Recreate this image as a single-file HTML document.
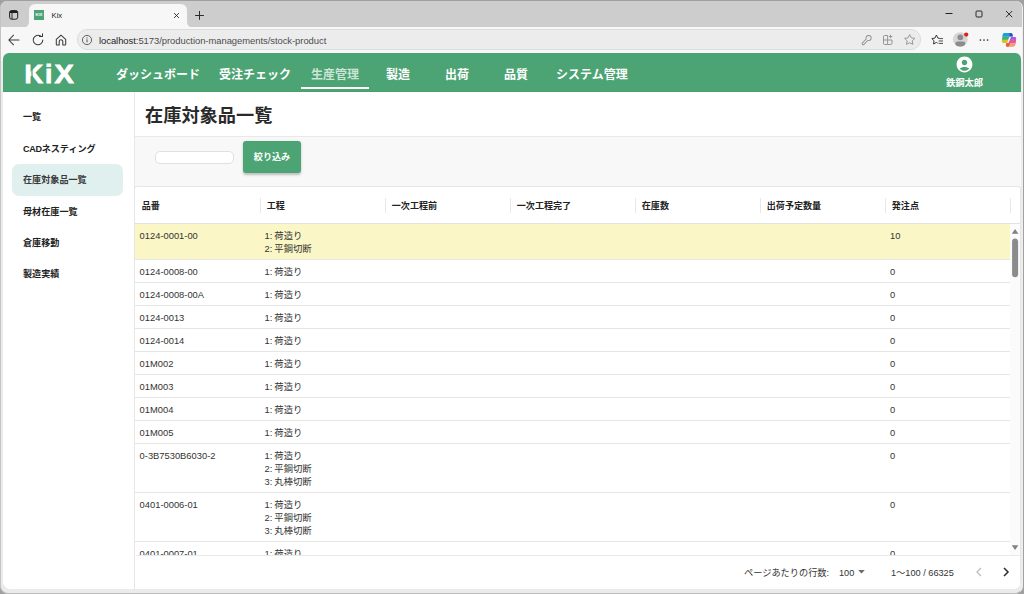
<!DOCTYPE html>
<html lang="ja">
<head>
<meta charset="utf-8">
<title>Kix</title>
<style>
*{box-sizing:border-box;margin:0;padding:0}
html,body{width:1024px;height:594px;overflow:hidden}
body{position:relative;background:#a0a0a0;font-family:"Liberation Sans","Noto Sans CJK JP",sans-serif;color:#222}
.abs{position:absolute}
/* ---------- window frame ---------- */
#win{position:absolute;left:0;top:1px;width:1023px;height:593px;background:#ebebeb;border-radius:7px 7px 8px 8px;overflow:hidden;border-left:1px solid #c4c4c4;border-bottom:1px solid #bcbcbc;border-right:1px solid #f0f0f0}
#tabstrip{position:absolute;left:0;top:0;width:1023px;height:26px;background:#cdcdcd}
#tab{position:absolute;left:28px;top:3px;width:158px;height:24px;background:#f7f7f7;border-radius:6px 6px 0 0}
#toolbar{position:absolute;left:0;top:26px;width:1023px;height:34px;background:#f7f7f7}
#urlpill{position:absolute;left:76px;top:28px;width:844px;height:21px;border-radius:10px;background:#ececec;border:1px solid #dcdcdc}
.chrome-txt{font-family:"Liberation Sans",sans-serif;color:#2a2a2a;white-space:nowrap;line-height:1}
/* ---------- page ---------- */
#page{position:absolute;left:2px;top:52px;width:1018px;height:536px;background:#fff;border-radius:6px 6px 8px 8px;overflow:hidden}
#hdr{position:absolute;left:0;top:0;width:1018px;height:39px;background:#4ca373;border-bottom:1px solid #45a06d}
.nav{position:absolute;top:14px;height:16px;line-height:16px;font-size:12px;font-weight:700;color:#fff;white-space:nowrap}
#side{position:absolute;left:0;top:39px;width:132px;height:497px;background:#fff;border-right:1px solid #e8e8e8}
.sitem{position:absolute;left:20px;height:14px;line-height:14px;font-size:9.100px;font-weight:700;color:#222;white-space:nowrap}
#main{position:absolute;left:132px;top:39px;width:886px;height:497px;background:#f8f8f8}
#titlebar{position:absolute;left:0;top:0;width:886px;height:45px;background:#fff;border-bottom:1px solid #e9e9e9}
#title{position:absolute;left:10px;top:11px;font-size:18.2px;line-height:26px;font-weight:700;color:#2a2a2a;white-space:nowrap}
#finput{position:absolute;left:20px;top:59px;width:79px;height:13px;background:#fff;border:1px solid #e0e0e0;border-radius:5px}
#fbtn{position:absolute;left:108px;top:49px;width:58px;height:32px;background:#4ca373;border-radius:3px;box-shadow:0 1.500px 2.500px rgba(0,0,0,.24);color:#fff;font-size:9.1px;font-weight:700;line-height:32px;text-align:center;white-space:nowrap}
#card{position:absolute;left:-1px;top:94px;width:887px;height:403px;background:#fff;border-top:1px solid #e6e6e6;border-left:1px solid #e6e6e6;border-right:1px solid #e6e6e6;border-radius:3px 3px 0 0}
#thead{position:absolute;left:0;top:0;width:885px;padding-left:1px;height:37px;border-bottom:1px solid #e2e2e2}
.th{position:absolute;top:12px;height:14px;line-height:14px;font-size:9.050px;margin-left:-.2px;font-weight:700;color:#222;white-space:nowrap}
.sep{position:absolute;top:11px;width:1px;height:15px;background:#e8e8e8}
#tbody{position:absolute;left:0;top:37px;width:875px;height:331px;overflow:hidden}
.row{position:absolute;left:0;width:875px;border-bottom:1px solid #e6e6e6;font-size:9.350px;line-height:13px;color:#333}
.row div{position:absolute;top:6.300px;white-space:nowrap}
.c1{left:4.600px}.c2{left:129.500px;word-spacing:-.6px}.c7{left:755px}
.hl{background:#faf6c6}
#vsb{position:absolute;left:875px;top:37px;width:10px;height:331px;background:#fbfbfb}
#tfoot{position:absolute;left:1px;top:368px;width:884px;height:34px;border-top:1px solid #e9e9e9;background:#fff;font-size:9.200px;line-height:14px;color:#333}
#tfoot div{position:absolute;top:9.600px;white-space:nowrap}
</style>
</head>
<body>
<div id="win">
  <div id="tabstrip"></div>
  <div id="tab">
    <svg class="abs" style="left:-6px;top:18px" width="6" height="6" viewBox="0 0 6 6"><path d="M6 0 V6 H0 A6 6 0 0 0 6 0Z" fill="#f7f7f7"/></svg>
    <svg class="abs" style="left:158px;top:18px" width="6" height="6" viewBox="0 0 6 6"><path d="M0 0 V6 H6 A6 6 0 0 1 0 0Z" fill="#f7f7f7"/></svg>
    <div class="abs" style="left:4.900px;top:5.800px;width:10.400px;height:10.400px;background:#4ca373;color:#fff;font:700 4px/10.400px 'Liberation Sans',sans-serif;text-align:center;letter-spacing:.1px">KIX</div>
    <div class="abs chrome-txt" style="left:22.500px;top:6.500px;font-size:7.700px;line-height:10px;color:#1c1c1c">Kix</div>
    <svg class="abs" style="left:143px;top:7px" width="9" height="9" viewBox="0 0 9 9"><path d="M2.100 2.100 L6.900 6.900 M6.900 2.100 L2.100 6.900" stroke="#222" stroke-width=".9" fill="none"/></svg>
  </div>
  <svg class="abs" style="left:192px;top:8px" width="12" height="12" viewBox="0 0 12 12"><path d="M6.500 2 V10.800 M2.100 6.500 H10.900" stroke="#2a2a2a" stroke-width="1" fill="none"/></svg>
  <svg class="abs" style="left:8px;top:8px" width="11" height="12" viewBox="0 0 11 12"><rect x=".600" y="1.600" width="8.100" height="8.600" rx="2" fill="none" stroke="#1e1e1e" stroke-width="1"/><path d="M.600 3.900 H8.700 V3.300 A1.700 1.700 0 0 0 7 1.600 H2.300 A1.700 1.700 0 0 0 .600 3.300Z" fill="#1e1e1e"/><path d="M3 3.600 V10.200" stroke="#1e1e1e" stroke-width=".9"/></svg>
  <svg class="abs" style="left:942px;top:8px" width="12" height="10" viewBox="0 0 12 10"><path d="M2.500 4.500 H9.500" stroke="#222" stroke-width="1"/></svg>
  <svg class="abs" style="left:973px;top:8px" width="10" height="10" viewBox="0 0 10 10"><rect x="2" y="2" width="6" height="6" rx="1" fill="none" stroke="#222" stroke-width=".95"/></svg>
  <svg class="abs" style="left:1003px;top:8px" width="10" height="10" viewBox="0 0 10 10"><path d="M2 2 L8.200 8.200 M8.200 2 L2 8.200" stroke="#222" stroke-width=".95" fill="none"/></svg>
  <div id="toolbar"></div>
  <div id="urlpill"></div>
  <svg class="abs" style="left:6px;top:32px" width="14" height="14" viewBox="0 0 14 14"><path d="M12 7 H2 M6.500 2.200 L1.800 7 L6.500 11.800" stroke="#3a3a3a" stroke-width="1.050" fill="none" stroke-linecap="round" stroke-linejoin="round"/></svg>
  <svg class="abs" style="left:29.500px;top:32px" width="14" height="14" viewBox="0 0 14 14"><path d="M11.800 7 A4.800 4.800 0 1 1 9.600 3" stroke="#3a3a3a" stroke-width="1.050" fill="none" stroke-linecap="round"/><path d="M8 2.900 H11 V0.200" stroke="#3a3a3a" stroke-width="1.050" fill="none" stroke-linecap="round" stroke-linejoin="round" transform="translate(0.500 0.600)"/></svg>
  <svg class="abs" style="left:53px;top:32px" width="14" height="14" viewBox="0 0 14 14"><path d="M2.300 6.400 L7 2.200 L11.700 6.400 V11.200 A.8 .8 0 0 1 10.900 12 H8.800 V8.600 A1.800 1.800 0 0 0 5.200 8.600 V12 H3.100 A.8 .8 0 0 1 2.300 11.200Z" stroke="#3a3a3a" stroke-width="1.050" fill="none" stroke-linejoin="round"/></svg>
  <svg class="abs" style="left:80px;top:33px" width="12" height="12" viewBox="0 0 12 12"><circle cx="6" cy="6" r="4.600" fill="none" stroke="#555" stroke-width=".9"/><path d="M6 5.300 V8.400" stroke="#555" stroke-width="1"/><circle cx="6" cy="3.800" r=".65" fill="#555"/></svg>
  <div class="abs chrome-txt" id="url" style="left:98px;top:34px;font-size:9.450px;line-height:11px;letter-spacing:-.05px"><span style="color:#1e1e1e">localhost</span><span style="color:#4c4c4c">:5173/production-managements/stock-product</span></div>
  <svg class="abs" style="left:860px;top:33px" width="12" height="12" viewBox="0 0 12 12"><path d="M7.500 4.300 L2.200 9.600" stroke="#8c8c8c" stroke-width="3" stroke-linecap="round" fill="none"/><circle cx="7.600" cy="4.100" r="3" fill="#8c8c8c"/><path d="M7.500 4.300 L2.200 9.600" stroke="#ececec" stroke-width="1.300" stroke-linecap="round" fill="none"/><circle cx="7.600" cy="4.100" r="2.150" fill="#ececec"/></svg>
  <svg class="abs" style="left:881px;top:33px" width="12" height="12" viewBox="0 0 12 12"><path d="M1.500 2.700 A1.200 1.200 0 0 1 2.700 1.500 H5.600 V10.500 H2.700 A1.200 1.200 0 0 1 1.500 9.300Z M5.600 6 H10 V9.300 A1.200 1.200 0 0 1 8.800 10.500 H5.600 M1.500 6 H5.600 M8.600 0.800 V4.200 M6.900 2.500 H10.300" stroke="#8c8c8c" stroke-width=".9" fill="none"/></svg>
  <svg class="abs" style="left:901.700px;top:32.300px" width="13.400" height="13.400" viewBox="0 0 14 14"><path d="M7 1.700 L8.650 5.050 L12.350 5.590 L9.670 8.200 L10.300 11.880 L7 10.140 L3.700 11.880 L4.330 8.200 L1.650 5.590 L5.350 5.050Z" stroke="#8c8c8c" stroke-width=".9" fill="none" stroke-linejoin="round"/></svg>
  <svg class="abs" style="left:930px;top:32px" width="14" height="14" viewBox="0 0 14 14"><path d="M8.200 5.300 L6.900 5.100 L5.400 2 L3.900 5.100 L0.800 5.550 L3.050 7.750 L2.500 11 L5.400 9.450 L6.300 9.950" stroke="#2e2e2e" stroke-width=".95" fill="none" stroke-linejoin="round" stroke-linecap="round"/><path d="M8.400 5.600 H12 M7.600 8 H12 M7.600 10.400 H12" stroke="#2e2e2e" stroke-width=".85" fill="none"/></svg>
  <svg class="abs" style="left:950px;top:28px" width="20" height="20" viewBox="0 0 20 20"><circle cx="9.300" cy="10.600" r="7.400" fill="#d6d6d6"/><circle cx="9.300" cy="8.300" r="2.900" fill="#8c8c8c"/><path d="M4.300 14.600 A2.100 2.100 0 0 1 6.400 12.500 H12.200 A2.100 2.100 0 0 1 14.300 14.600 C14.300 16.400 12.200 17.500 9.300 17.500 C6.400 17.500 4.300 16.400 4.300 14.600Z" fill="#8c8c8c"/><circle cx="15.200" cy="5.600" r="2.150" fill="#e0201c"/></svg>
  <svg class="abs" style="left:977.200px;top:36px" width="12" height="6" viewBox="0 0 12 6"><circle cx="2.400" cy="3" r=".85" fill="#333"/><circle cx="6" cy="3" r=".85" fill="#333"/><circle cx="9.600" cy="3" r=".85" fill="#333"/></svg>
  <svg class="abs" style="left:1000px;top:31px" width="16" height="16" viewBox="0 0 16 16">
    <defs>
      <clipPath id="cpl"><path d="M3 .9 H9.800 Q11.800 .9 11.800 2.900 V4.800 H8.300 L6.100 11.100 H2.500 Q.7 11.100 .8 9.300 L1.500 3.200 Q1.800 .9 3.400 .9Z"/></clipPath>
      <clipPath id="cpr"><path d="M10 4.700 H13.300 Q15.300 4.700 15.200 6.700 L14.700 11.500 Q14.300 14.800 11.800 14.800 H6.300 Q4.500 14.800 4.900 13.100 L5.500 10.900 H7.600 Z"/></clipPath>
    </defs>
    <g clip-path="url(#cpl)"><rect x="0" y="0" width="8.200" height="4.800" fill="#1c9fd8"/><rect x="8.200" y="0" width="4" height="4.800" fill="#2450c8"/><rect x="0" y="4.800" width="12" height="3.100" fill="#3db46e"/><rect x="0" y="7.900" width="12" height="3.400" fill="#d4c322"/></g>
    <g clip-path="url(#cpr)"><rect x="4" y="4.700" width="12" height="3.200" fill="#b054e2"/><rect x="4" y="7.900" width="12" height="3.600" fill="#e9549a"/><rect x="4" y="11.500" width="12" height="3.500" fill="#f0a06c"/><path d="M4 10.800 H9.200 L7.600 14.900 H4Z" fill="#f25546"/></g>
  </svg>
  <div id="page">
    <div id="hdr">
      <svg class="abs" style="left:20px;top:6px" width="60" height="30" viewBox="0 0 60 30">
        <text y="23.500" font-family="Liberation Sans, sans-serif" font-weight="700" font-size="26.500" fill="#fff" stroke="#fff" stroke-width=".8"><tspan x="1.600" textLength="18.600" lengthAdjust="spacingAndGlyphs">K</tspan><tspan x="21.900">i</tspan><tspan x="31.500" textLength="19.300" lengthAdjust="spacingAndGlyphs">X</tspan></text>
        <rect x="8.400" y="2" width="1.200" height="24" fill="#4ca373"/>
      </svg>
      <div class="nav" style="left:113px">ダッシュボード</div>
      <div class="nav" style="left:216px">受注チェック</div>
      <div class="nav" style="left:308px;color:rgba(255,255,255,.72)">生産管理</div>
      <div class="abs" style="left:297.500px;top:34px;width:68.300px;height:1.500px;background:#fff"></div>
      <div class="nav" style="left:383px">製造</div>
      <div class="nav" style="left:442px">出荷</div>
      <div class="nav" style="left:501px">品質</div>
      <div class="nav" style="left:553px">システム管理</div>
      <svg class="abs" style="left:952px;top:2.400px" width="19" height="19" viewBox="0 0 24 24"><path fill="#fff" d="M12 2C6.48 2 2 6.48 2 12s4.48 10 10 10 10-4.480 10-10S17.52 2 12 2zm0 4c1.930 0 3.500 1.570 3.500 3.500S13.930 13 12 13s-3.500-1.570-3.500-3.500S10.070 6 12 6zm0 14c-2.030 0-4.430-.820-6.140-2.880C7.550 15.800 9.680 15 12 15s4.450.800 6.140 2.120C16.430 19.180 14.030 20 12 20z"/></svg>
      <div class="abs" style="left:923.500px;top:23px;width:76px;text-align:center;font-size:9.3px;line-height:14px;font-weight:700;color:#fff;white-space:nowrap">鉄鋼太郎</div>
    </div>
    <div id="side">
      <div class="abs" style="left:9.300px;top:72.100px;width:110.800px;height:31.500px;border-radius:7px;background:#e0f0ee"></div>
      <div class="sitem" style="top:18px">一覧</div>
      <div class="sitem" style="top:49.700px"><span style="letter-spacing:-.35px">CAD</span>ネスティング</div>
      <div class="sitem" style="top:81px;color:#3a3a3a">在庫対象品一覧</div>
      <div class="sitem" style="top:112.700px">母材在庫一覧</div>
      <div class="sitem" style="top:143.600px">倉庫移動</div>
      <div class="sitem" style="top:174.600px">製造実績</div>
    </div>
    <div id="main">
      <div id="titlebar"><div id="title">在庫対象品一覧</div></div>
      <div id="finput"></div>
      <div id="fbtn">絞り込み</div>
      <div id="card">
        <div id="thead"><div class="th" style="left:7px">品番</div><div class="th" style="left:132px">工程</div><div class="th" style="left:257px">一次工程前</div><div class="th" style="left:382px">一次工程完了</div><div class="th" style="left:507px">在庫数</div><div class="th" style="left:632px">出荷予定数量</div><div class="th" style="left:757px">発注点</div><div class="sep" style="left:125px"></div><div class="sep" style="left:250px"></div><div class="sep" style="left:375px"></div><div class="sep" style="left:500px"></div><div class="sep" style="left:625px"></div><div class="sep" style="left:750px"></div><div class="sep" style="left:875px"></div></div>
        <div id="tbody">
        <div class="row hl" style="top:0px;height:36px"><div class="c1">0124-0001-00</div><div class="c2">1: 荷造り<br>2: 平鋼切断</div><div class="c7">10</div></div>
        <div class="row" style="top:36px;height:23px"><div class="c1">0124-0008-00</div><div class="c2">1: 荷造り</div><div class="c7">0</div></div>
        <div class="row" style="top:59px;height:23px"><div class="c1">0124-0008-00A</div><div class="c2">1: 荷造り</div><div class="c7">0</div></div>
        <div class="row" style="top:82px;height:23px"><div class="c1">0124-0013</div><div class="c2">1: 荷造り</div><div class="c7">0</div></div>
        <div class="row" style="top:105px;height:23px"><div class="c1">0124-0014</div><div class="c2">1: 荷造り</div><div class="c7">0</div></div>
        <div class="row" style="top:128px;height:23px"><div class="c1">01M002</div><div class="c2">1: 荷造り</div><div class="c7">0</div></div>
        <div class="row" style="top:151px;height:23px"><div class="c1">01M003</div><div class="c2">1: 荷造り</div><div class="c7">0</div></div>
        <div class="row" style="top:174px;height:23px"><div class="c1">01M004</div><div class="c2">1: 荷造り</div><div class="c7">0</div></div>
        <div class="row" style="top:197px;height:23px"><div class="c1">01M005</div><div class="c2">1: 荷造り</div><div class="c7">0</div></div>
        <div class="row" style="top:220px;height:49px"><div class="c1">0-3B7530B6030-2</div><div class="c2">1: 荷造り<br>2: 平鋼切断<br>3: 丸棒切断</div><div class="c7">0</div></div>
        <div class="row" style="top:269px;height:49px"><div class="c1">0401-0006-01</div><div class="c2">1: 荷造り<br>2: 平鋼切断<br>3: 丸棒切断</div><div class="c7">0</div></div>
        <div class="row" style="top:318px;height:49px"><div class="c1">0401-0007-01</div><div class="c2">1: 荷造り<br>2: 平鋼切断<br>3: 丸棒切断</div><div class="c7">0</div></div>
        </div>
        <div id="vsb">
          <svg class="abs" style="left:0;top:0" width="10" height="331" viewBox="0 0 10 331"><path d="M1.800 9.700 L5.100 5 L8.400 9.700 Z" fill="#808080"/><rect x="2.100" y="14.600" width="6" height="38.600" rx="3" fill="#8b8b8b"/><path d="M1.800 321.200 L8.400 321.200 L5.100 325.900 Z" fill="#808080"/></svg>
        </div>
        <div id="tfoot">
          <div style="left:608px">ページあたりの行数:</div>
          <div style="left:703px">100</div>
          <svg class="abs" style="left:721px;top:13.300px" width="9" height="6" viewBox="0 0 9 6"><path d="M1.2 1 L7.800 1 L4.500 4.600 Z" fill="#6b6b6b"/></svg>
          <div style="left:755px">1〜100 / 66325</div>
          <svg class="abs" style="left:837px;top:10.300px" width="12" height="12" viewBox="0 0 12 12"><path d="M8 2 L4 6 L8 10" fill="none" stroke="#bdbdbd" stroke-width="1.3"/></svg>
          <svg class="abs" style="left:864px;top:10.300px" width="12" height="12" viewBox="0 0 12 12"><path d="M4 2 L8 6 L4 10" fill="none" stroke="#2b2b2b" stroke-width="1.5"/></svg>
        </div>
      </div>
    </div>
  </div>
</div>
</body>
</html>
